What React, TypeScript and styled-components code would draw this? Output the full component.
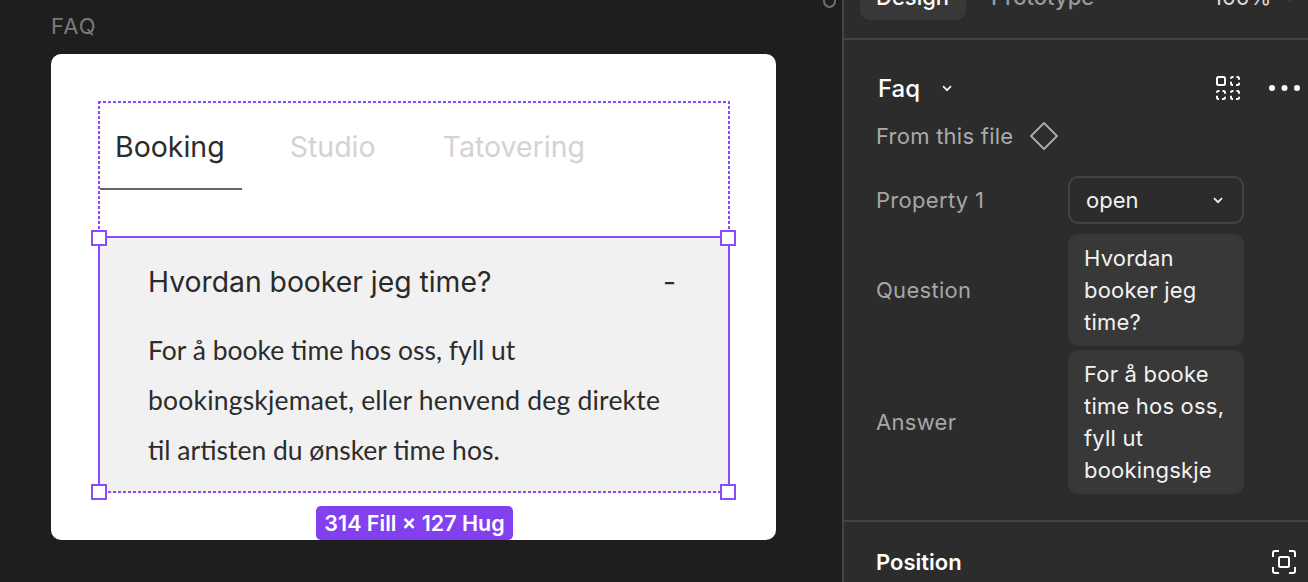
import React from 'react';
import styled, { createGlobalStyle } from 'styled-components';

const accent = '#8a4bff';

const GlobalStyle = createGlobalStyle`
  html, body {
    margin: 0;
    padding: 0;
    background: #1e1e1e;
    overflow: hidden;
  }
  * {
    box-sizing: border-box;
  }
`;

const Page = styled.div`
  display: flex;
  width: 1308px;
  height: 582px;
  overflow: hidden;
  font-family: Inter, 'Liberation Sans', sans-serif;
`;

// Canvas side
const Canvas = styled.main`
  position: relative;
  flex: 0 0 842px;
  padding: 14px 0 0 51px;
  background: #1e1e1e;
`;

const CutOffGlyph = styled.span`
  position: absolute;
  top: -6px;
  left: 823px;
  width: 13px;
  height: 14px;
  border: 2px solid #6e6e6e;
  border-radius: 50%;
`;

const FrameLabel = styled.div`
  height: 40px;
  font-size: 22px;
  line-height: 24px;
  letter-spacing: 1.2px;
  color: #7b7b7b;
`;

const Card = styled.section`
  position: relative;
  width: 725px;
  height: 486px;
  padding: 47px 46px 46px 47px;
  background: #ffffff;
  border-radius: 10px;
`;

// dotted outline of the instance, drawn as gradients to get the 3/2 dash
const Instance = styled.div`
  position: relative;
  width: 632px;

  &::after {
    content: '';
    position: absolute;
    inset: 0;
    pointer-events: none;
    z-index: 3;
    background:
      repeating-linear-gradient(to right, ${accent} 0 3px, transparent 3px 5px) top / 100% 2px no-repeat,
      repeating-linear-gradient(to right, ${accent} 0 3px, transparent 3px 5px) bottom / 100% 2px no-repeat,
      repeating-linear-gradient(to bottom, ${accent} 0 3px, transparent 3px 5px) left / 2px 100% no-repeat,
      repeating-linear-gradient(to bottom, ${accent} 0 3px, transparent 3px 5px) right / 2px 100% no-repeat;
  }
`;

const TabRow = styled.div`
  display: flex;
  height: 135px;
  padding: 0 0 46px 2px;
`;

const Tab = styled.div<{ $active?: boolean }>`
  display: flex;
  align-items: center;
  height: 89px;
  padding: 3px 17px 0 15px;
  margin-right: ${p => (p.$active ? '33px' : '35px')};
  font-size: 28.5px;
  color: ${p => (p.$active ? '#2c2c2c' : '#d3d3d3')};
  border-bottom: 2px solid ${p => (p.$active ? '#666666' : 'transparent')};
`;

const Accordion = styled.div`
  position: relative;
  height: 257px;
  padding: 29px 54px 0 50px;
  background: #f1f1f1;
`;

const Selection = styled.div`
  position: absolute;
  inset: 0;
  border-top: 2px solid ${accent};
  border-left: 2px solid ${accent};
  border-right: 2px solid ${accent};
  z-index: 4;
`;

const Handle = styled.span<{ $right?: boolean; $bottom?: boolean }>`
  position: absolute;
  width: 16px;
  height: 16px;
  background: #ffffff;
  border: 2px solid ${accent};
  ${p => (p.$right ? 'right: -8px;' : 'left: -9px;')}
  ${p => (p.$bottom ? 'bottom: -7px;' : 'top: -8px;')}
`;

const QuestionRow = styled.div`
  display: flex;
  justify-content: space-between;
  align-items: center;
  height: 34px;
  margin-bottom: 26px;
  font-size: 28.3px;
  color: #2a2a2a;
`;

const AnswerText = styled.p`
  margin: 0;
  font-family: Lato, 'Noto Sans', sans-serif;
  font-size: 26.5px;
  line-height: 50px;
  white-space: nowrap;
  color: #2c2c2c;
`;

const WideLine = styled.span`
  letter-spacing: 0.2px;
`;

const SizeBadge = styled.div`
  position: absolute;
  left: 265px;
  bottom: 0;
  width: 197px;
  height: 34px;
  display: flex;
  align-items: center;
  justify-content: center;
  font-size: 21.5px;
  font-weight: 600;
  color: #ffffff;
  background: #8340ee;
  border-radius: 5px;
  z-index: 5;
`;

// Properties panel
const Panel = styled.aside`
  flex: 1;
  display: flex;
  flex-direction: column;
  background: #2c2c2c;
  border-left: 2px solid #444444;
`;

const PanelTabs = styled.div`
  display: flex;
  align-items: flex-end;
  height: 40px;
  padding: 0 0 18px 16px;
  border-bottom: 2px solid #444444;
  font-size: 22px;
`;

const DesignTab = styled.div`
  width: 106px;
  height: 44px;
  flex-shrink: 0;
  padding: 5px 0 0 16px;
  line-height: 32px;
  font-weight: 500;
  color: #ffffff;
  background: #383838;
  border-radius: 10px;
`;

const PrototypeTab = styled.div`
  width: 247px;
  height: 44px;
  flex-shrink: 0;
  padding: 5px 0 0 25px;
  line-height: 32px;
  font-weight: 500;
  color: #9a9a9a;
`;

const ZoomValue = styled.div`
  display: flex;
  align-items: center;
  gap: 14px;
  height: 37px;
  margin-bottom: 7px;
  padding-top: 5px;
  line-height: 32px;
  color: #d9d9d9;
`;

const PropsSection = styled.section`
  height: 482px;
  padding: 30px 0 0 32px;
  border-bottom: 2px solid #444444;
`;

const TitleRow = styled.div`
  display: flex;
  align-items: center;
  height: 36px;
  padding-left: 2px;
`;

const ComponentName = styled.h2`
  margin: 0 22px 0 0;
  font-size: 24px;
  font-weight: 500;
  color: #ffffff;
`;

const TitleActions = styled.div`
  display: flex;
  align-items: center;
  gap: 29px;
  margin-left: auto;
  margin-right: 8px;
`;

const SourceRow = styled.div`
  display: flex;
  align-items: center;
  gap: 17px;
  height: 30px;
  margin: 15px 0 25px;
  font-size: 22px;
  letter-spacing: 0.25px;
  color: #ababab;
`;

const PropRow = styled.div<{ $gap?: number }>`
  display: grid;
  grid-template-columns: 192px 176px;
  align-items: center;
  margin-top: ${p => p.$gap ?? 0}px;
`;

const PropLabel = styled.span`
  font-size: 22px;
  letter-spacing: 0.3px;
  color: #a6a6a6;
`;

const SelectBox = styled.div`
  display: flex;
  align-items: center;
  justify-content: space-between;
  height: 48px;
  padding: 0 19px 0 16px;
  font-size: 22px;
  color: #f0f0f0;
  border: 2px solid #444444;
  border-radius: 10px;
`;

const ValueBox = styled.div`
  padding: 8px 10px 8px 16px;
  font-size: 22px;
  line-height: 32px;
  letter-spacing: 0.2px;
  color: #f2f2f2;
  background: #383838;
  border-radius: 10px;
`;

const SectionHead = styled.div`
  display: flex;
  align-items: center;
  justify-content: space-between;
  padding: 27px 12px 0 32px;
  font-size: 22px;
  font-weight: 600;
  color: #ffffff;
`;

const Icon = styled.svg`
  display: block;
  flex-shrink: 0;
`;

const Chevron: React.FC = () => (
  <Icon width="10" height="7" viewBox="0 0 10 7" fill="none">
    <path d="M1 1.2 5 5.2l4-4" stroke="#f0f0f0" strokeWidth="1.8" />
  </Icon>
);

const VariantsIcon: React.FC = () => (
  <Icon width="24" height="24" viewBox="0 0 24 24" fill="none" stroke="#ffffff" strokeWidth="2">
    <rect x="1" y="1" width="8" height="8" rx="1.5" />
    <rect x="15" y="1" width="8" height="8" rx="1.5" strokeDasharray="4.35 3" strokeDashoffset="3.35" />
    <rect x="1" y="15" width="8" height="8" rx="1.5" strokeDasharray="4.35 3" strokeDashoffset="3.35" />
    <rect x="15" y="15" width="8" height="8" rx="1.5" strokeDasharray="4.35 3" strokeDashoffset="3.35" />
  </Icon>
);

const DotsIcon: React.FC = () => (
  <Icon width="31" height="6" viewBox="0 0 31 6" fill="#ffffff">
    <circle cx="3" cy="3" r="3" />
    <circle cx="15.5" cy="3" r="3" />
    <circle cx="28" cy="3" r="3" />
  </Icon>
);

const DiamondIcon: React.FC = () => (
  <Icon width="28" height="28" viewBox="0 0 28 28" fill="none">
    <path d="M14 1 27 14 14 27 1 14Z" stroke="#ababab" strokeWidth="1.8" strokeLinejoin="round" />
  </Icon>
);

const FocusIcon: React.FC = () => (
  <Icon width="24" height="24" viewBox="0 0 24 24" fill="none" stroke="#ffffff" strokeWidth="2">
    <path d="M7 1H3a2 2 0 0 0-2 2v4M17 1h4a2 2 0 0 1 2 2v4M1 17v4a2 2 0 0 0 2 2h4M23 17v4a2 2 0 0 1-2 2h-4" />
    <rect x="7" y="7" width="10" height="10" rx="1.5" />
  </Icon>
);

const tabs = ['Booking', 'Studio', 'Tatovering'];

const App: React.FC = () => (
  <Page>
    <GlobalStyle />
    <Canvas>
      <CutOffGlyph />
      <FrameLabel>FAQ</FrameLabel>
      <Card>
        <Instance>
          <TabRow>
            {tabs.map((name, i) => (
              <Tab key={name} $active={i === 0}>
                {name}
              </Tab>
            ))}
          </TabRow>
          <Accordion>
            <Selection>
              <Handle />
              <Handle $right />
              <Handle $bottom />
              <Handle $right $bottom />
            </Selection>
            <QuestionRow>
              <span>Hvordan booker jeg time?</span>
              <span>-</span>
            </QuestionRow>
            <AnswerText>
              For å booke time hos oss, fyll ut
              <br />
              <WideLine>bookingskjemaet, eller henvend deg direkte</WideLine>
              <br />
              til artisten du ønsker time hos.
            </AnswerText>
          </Accordion>
        </Instance>
        <SizeBadge>314 Fill × 127 Hug</SizeBadge>
      </Card>
    </Canvas>
    <Panel>
      <PanelTabs>
        <DesignTab>Design</DesignTab>
        <PrototypeTab>Prototype</PrototypeTab>
        <ZoomValue>
          100%
          <Chevron />
        </ZoomValue>
      </PanelTabs>
      <PropsSection>
        <TitleRow>
          <ComponentName>Faq</ComponentName>
          <Chevron />
          <TitleActions>
            <VariantsIcon />
            <DotsIcon />
          </TitleActions>
        </TitleRow>
        <SourceRow>
          From this file
          <DiamondIcon />
        </SourceRow>
        <PropRow>
          <PropLabel>Property 1</PropLabel>
          <SelectBox>
            open
            <Chevron />
          </SelectBox>
        </PropRow>
        <PropRow $gap={10}>
          <PropLabel>Question</PropLabel>
          <ValueBox>
            Hvordan
            <br />
            booker jeg
            <br />
            time?
          </ValueBox>
        </PropRow>
        <PropRow $gap={4}>
          <PropLabel>Answer</PropLabel>
          <ValueBox>
            For å booke
            <br />
            time hos oss,
            <br />
            fyll ut
            <br />
            bookingskje
          </ValueBox>
        </PropRow>
      </PropsSection>
      <SectionHead>
        Position
        <FocusIcon />
      </SectionHead>
    </Panel>
  </Page>
);

export default App;
